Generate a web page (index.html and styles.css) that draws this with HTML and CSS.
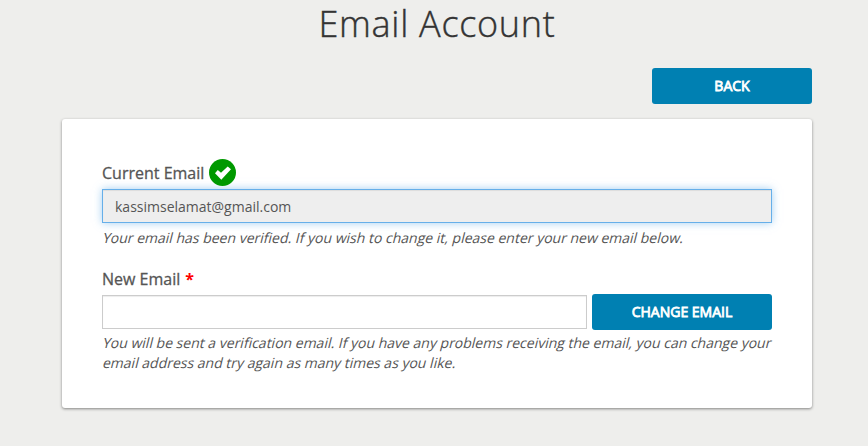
FILE: index.html
```
<!DOCTYPE html>
<html lang="en">
<head>
  <meta charset="UTF-8" />
  <title>Email Account</title>
  <meta name="viewport" content="width=device-width, initial-scale=1" />
  <link rel="stylesheet" href="styles.css">
</head>
<body>
  <div class="container" role="main">
    <h1>Email Account</h1>
    <div class="actions">
      <button type="button" class="btn btn-back">BACK</button>
    </div>
    <form class="panel">
      <div class="field">
        <label for="current-email">
          <span>Current Email</span>
          <svg class="verified" viewBox="0 0 27 27" aria-label="Verified">
            <circle cx="13.5" cy="13.5" r="13.5" fill="#090" />
            <path d="M6 14.2L8.8 11L12 13.7L18.7 7.4L22 10.3L12.3 20.8Z" fill="#fff" />
          </svg>
        </label>
        <input type="text" id="current-email" class="current" value="kassimselamat@gmail.com" readonly />
        <p class="help"><span>Your email has been verified. If you wish to change it, please enter your new email below.</span></p>
      </div>
      <div class="field">
        <label for="new-email"><span>New Email</span> <span class="required">*</span></label>
        <div class="input-row">
          <input type="text" id="new-email" />
          <button type="submit" class="btn btn-change">CHANGE EMAIL</button>
        </div>
        <p class="help help-new">
          <span>You will be sent a verification email. If you have any problems receiving the email, you can change your</span>
          <span>email address and try again as many times as you like.</span>
        </p>
      </div>
    </form>
  </div>
</body>
</html>
```
FILE: styles.css
```
*, *::before, *::after { box-sizing: border-box; }
body {
  margin: 0;
  min-height: 100vh;
  background: #eeeeec;
  font-family: "Open Sans", sans-serif;
  font-size: 14px;
  line-height: 20px;
  color: #555;
}
.container {
  width: 750px;
  margin-left: 62px;
}
h1 {
  margin: 0;
  height: 68px;
  font-size: 36px;
  font-weight: 300;
  line-height: 48px;
  letter-spacing: 0.7px;
  text-align: center;
  color: #333;
  -webkit-text-stroke: 0.4px #333;
}
.actions {
  display: flex;
  justify-content: flex-end;
  margin-bottom: 15px;
}
.btn {
  height: 36px;
  padding: 0 0 1px;
  border: none;
  border-radius: 3px;
  background: #0080b2;
  color: #fff;
  font-family: inherit;
  font-size: 14px;
  font-weight: 400;
  -webkit-text-stroke: 0.8px #fff;
  cursor: pointer;
}
.btn-back {
  width: 160px;
}
.btn-change {
  width: 180px;
}
.panel {
  height: 289px;
  padding: 39px 40px 0;
  background: #fff;
  border-radius: 3px;
  box-shadow: 0 1px 3px rgba(0, 0, 0, 0.45);
}
.field {
  margin-bottom: 16px;
}
label {
  display: flex;
  align-items: center;
  gap: 5px;
  font-size: 16px;
  line-height: 31px;
  -webkit-text-stroke: 0.3px #555;
}
.verified {
  width: 27px;
  height: 27px;
  margin-top: -3px;
}
.required {
  color: #f00;
  font-weight: 700;
  -webkit-text-stroke: 0;
}
input {
  width: 100%;
  height: 34px;
  padding: 0 12px;
  border: 1px solid #ccc;
  background: #fff;
  box-shadow: inset 0 1px 1px rgba(0, 0, 0, 0.075);
  color: #555;
  font-family: inherit;
  font-size: 14px;
  outline: none;
}
.current {
  display: block;
  background: #eee;
  border-color: #66afe9;
  box-shadow: inset 0 1px 1px rgba(0, 0, 0, 0.075), 0 0 8px rgba(102, 175, 233, 0.6);
}
.input-row {
  display: flex;
  align-items: center;
  gap: 5px;
  margin-top: -1px;
}
.input-row input {
  flex: 1;
}
.help {
  margin: 5px 0 0;
  white-space: nowrap;
}
/* slanted regular face, wider than the true italic */
.help span {
  display: block;
  transform: skewX(-14deg);
  transform-origin: 0 75%;
}
.help-new {
  margin-top: 3px;
}
```
